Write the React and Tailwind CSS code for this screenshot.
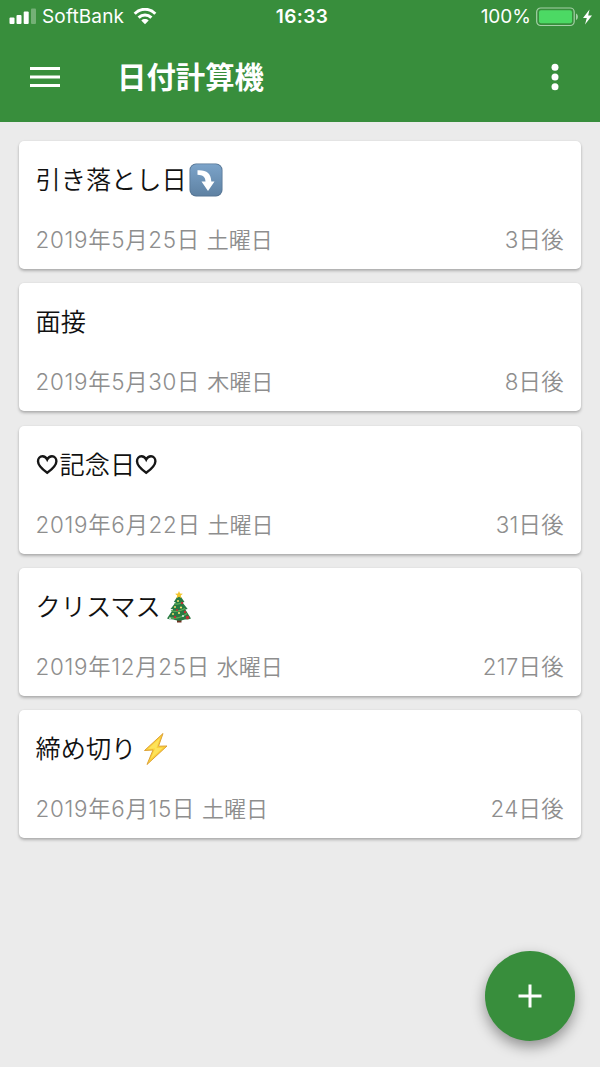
import React from 'react';

const events = [
  { title: '引き落とし日', icon: 'arrow', date: '2019年5月25日', weekday: '土曜日', left: '3日後' },
  { title: '面接', date: '2019年5月30日', weekday: '木曜日', left: '8日後' },
  { title: '記念日', icon: 'hearts', date: '2019年6月22日', weekday: '土曜日', left: '31日後' },
  { title: 'クリスマス', icon: 'tree', date: '2019年12月25日', weekday: '水曜日', left: '217日後' },
  { title: '締め切り', icon: 'bolt', date: '2019年6月15日', weekday: '土曜日', left: '24日後' },
];

function Heart() {
  return (
    <svg className="w-[24px] h-[24px] shrink-0" viewBox="0 0 24 24" fill="none" stroke="#161616" strokeWidth="2.4">
      <path d="M11.200 19.800C6 16 2 12.500 2 8.200c0-2.800 1.900-4.900 4.400-4.900 2.100 0 3.800 1.200 4.800 3.200 1-2 2.700-3.200 4.800-3.200 2.500 0 4.400 2.100 4.400 4.900 0 4.300-4 7.800-9.200 11.600z" />
    </svg>
  );
}

function ArrowBadge() {
  return (
    <svg className="w-[34px] h-[34px] ml-[2px] shrink-0" viewBox="0 0 34 34">
      <defs>
        <linearGradient id="badge" x1="0" y1="0" x2="0" y2="1">
          <stop offset="0" stopColor="#7ba3c9" />
          <stop offset="1" stopColor="#5f82a3" />
        </linearGradient>
      </defs>
      <rect x="0.5" y="0.5" width="33" height="33" rx="6.5" fill="#557493" />
      <rect x="1.3" y="1.3" width="31.4" height="31.2" rx="6" fill="url(#badge)" />
      <path d="M8.500 7.200c9-.5 13.500 3 13.800 11.300h3.200L19 28l-6.500-9.500h4c-.1-4.500-2.500-6.500-8-6.700z" fill="#fff" />
    </svg>
  );
}

function Tree() {
  return (
    <svg className="w-[26px] h-[34px] ml-[5px] shrink-0" viewBox="0 0 26 34">
      <path d="M11 27h4.500v5.500h-4.500z" fill="#6d3323" />
      <path d="M13 4 7.800 12l2 .2L4.500 19l2.600.3L1 28.500c3 1.600 6 .5 8 1.500 3 1 6 .8 8 0 3-.8 5-.2 8-1.500L19.300 19.500l2.400-.6-5.200-6.500 2-.5z" fill="#277a43" />
      <path d="M8.500 13.500c3 1.500 5 .5 8-1M5 20.500c5 2 9 1 14-2M3 27.500c6 1.500 12 .5 18-4" fill="none" stroke="#61ad55" strokeWidth="1.300" />
      <path d="M13 1l1.100 2.600 2.800.2-2.100 1.800.6 2.700L13 6.800l-2.400 1.500.6-2.700-2.100-1.800 2.800-.2z" fill="#f3c52f" />
      <g fill="#f6e26b">
        <circle cx="12" cy="11" r="1" />
        <circle cx="9" cy="17" r="1" />
        <circle cx="15" cy="17.500" r="1.100" />
        <circle cx="7" cy="24" r="1" />
        <circle cx="13" cy="23" r="1.100" />
      </g>
      <g fill="#c02f35">
        <circle cx="16" cy="13" r="1.200" />
        <circle cx="11" cy="20" r="1.100" />
        <circle cx="19" cy="22" r="1.200" />
        <circle cx="21.500" cy="27.500" r="1.700" />
        <circle cx="9" cy="27" r="1.200" />
      </g>
      <g fill="#dce8ee">
        <circle cx="4" cy="28.300" r="0.900" />
        <circle cx="17" cy="26" r="1" />
      </g>
    </svg>
  );
}

function Bolt() {
  return (
    <svg className="w-[26px] h-[34px] ml-[7px] shrink-0" viewBox="0 0 26 34">
      <path d="M20 1.500 1.500 18.500l8.500-.5L4 32.500 24 14l-8.500.2z" fill="#fbcf38" stroke="#dda236" strokeWidth="1" strokeLinejoin="round" />
      <path d="M17 6 5 17l7-.4-4.500 10.500L20 15.700l-6.500.2z" fill="#fde35a" />
    </svg>
  );
}

function StatusBar() {
  return (
    <div className="h-[33px] grid grid-cols-3 items-center pl-[9px] pr-[7px] text-[19px] leading-[33px]">
      <div className="flex items-center">
        <svg className="w-[27px] h-[17px]" viewBox="0 0 27 17" fill="#fff">
          <rect x="0.500" y="9.500" width="5" height="6.500" rx="1" />
          <rect x="7.500" y="7" width="5" height="9" rx="1" />
          <rect x="14.700" y="3.500" width="5" height="12.500" rx="1" />
          <rect x="22" y="0.500" width="5" height="15.500" rx="1" opacity="0.300" />
        </svg>
        <span className="ml-[6px] w-[82px] tracking-[0.150px] whitespace-nowrap">SoftBank</span>
        <svg className="ml-[9px] w-[24px] h-[18px]" viewBox="0 0 24 18" fill="none" stroke="#fff" strokeWidth="3">
          <path d="M1.700 5.700C7.500-.2 16.500-.2 22.300 5.700" />
          <path d="M5.600 9.700c3.700-3.600 9.100-3.600 12.800 0" />
          <path d="M12 16.300l-3.700-3.800c2.200-1.900 5.200-1.900 7.400 0z" fill="#fff" stroke="none" />
        </svg>
      </div>
      <div className="pl-[2px] text-center font-semibold tracking-[0.400px]">16:33</div>
      <div className="flex items-center justify-end">
        <span>100%</span>
        <svg className="ml-[5px] w-[44px] h-[20px]" viewBox="0 0 44 20">
          <rect x="0.700" y="1" width="37.500" height="17.500" rx="4" fill="none" stroke="#a6d0a8" strokeWidth="1.200" />
          <rect x="3" y="3.300" width="33" height="12.900" rx="2" fill="#4cd964" />
          <path d="M40 6.500c2.500 1.200 2.500 5.300 0 6.500z" fill="#a6d0a8" />
        </svg>
        <svg className="ml-[2px] w-[11px] h-[16px]" viewBox="0 0 11 16" fill="#fff">
          <path d="M7.500.5 1 9h3.800L3 15.500 10 6.500H6.200z" />
        </svg>
      </div>
    </div>
  );
}

function AppBar() {
  return (
    <div className="h-[89px] flex items-center pl-[30px] pr-[41px] pb-[2px]">
      <svg className="w-[30px] h-[20px]" viewBox="0 0 30 20" fill="#fff">
        <path d="M0 0h30v3H0zM0 8.500h30v3H0zM0 17h30v3H0z" />
      </svg>
      <h1 className="ml-[57px] mt-[2px] text-[29.400px] font-bold leading-[40px]">日付計算機</h1>
      <svg className="ml-auto w-[8px] h-[28px]" viewBox="0 0 8 28" fill="#fff">
        <circle cx="4" cy="4.300" r="3.500" />
        <circle cx="4" cy="14" r="3.500" />
        <circle cx="4" cy="23.700" r="3.500" />
      </svg>
    </div>
  );
}

function EventCard({ title, icon, date, weekday, left }) {
  return (
    <div className="h-[128px] rounded-[5px] bg-white px-[17px] pt-[19px] shadow-[0_2px_3px_rgba(0,0,0,0.250),0_0_2px_rgba(0,0,0,0.080)]">
      <div className="flex items-center h-[40px] text-[25.200px] leading-[40px] font-[350] text-[#111]">
        {icon === 'hearts' && <Heart />}
        <span className="-ml-[0.500px]">{title}</span>
        {icon === 'hearts' && <Heart />}
        {icon === 'arrow' && <ArrowBadge />}
        {icon === 'tree' && <Tree />}
        {icon === 'bolt' && <Bolt />}
      </div>
      <div className="mt-[24px] flex justify-between text-[22.400px] leading-[32px] font-[350] text-[#8e8e8e]">
        <span className="-ml-[0.500px] tracking-[0.700px]">
          {date} <span className="text-[22px] tracking-normal">{weekday}</span>
        </span>
        <span className="tracking-[0.300px]">{left}</span>
      </div>
    </div>
  );
}

function App() {
  return (
    <div className="relative h-[1067px] w-[600px] overflow-hidden bg-[#ebebeb] font-['Inter','Noto_Sans_CJK_JP',sans-serif]">
      <header className="bg-[#388e3c] text-white">
        <StatusBar />
        <AppBar />
      </header>

      <main className="flex flex-col gap-[14.300px] px-[19px] pt-[19px]">
        {events.map((event) => (
          <EventCard key={event.title} {...event} />
        ))}
      </main>

      <button className="absolute right-[25px] bottom-[26px] flex h-[90px] w-[90px] items-center justify-center rounded-full bg-[#388e3c] shadow-[0_6px_14px_rgba(0,0,0,0.380)]">
        <svg className="w-[24px] h-[24px]" viewBox="0 0 24 24" stroke="#fff" strokeWidth="3">
          <path d="M12 0.500v23M0.500 12h23" />
        </svg>
      </button>
    </div>
  );
}

export default App;
